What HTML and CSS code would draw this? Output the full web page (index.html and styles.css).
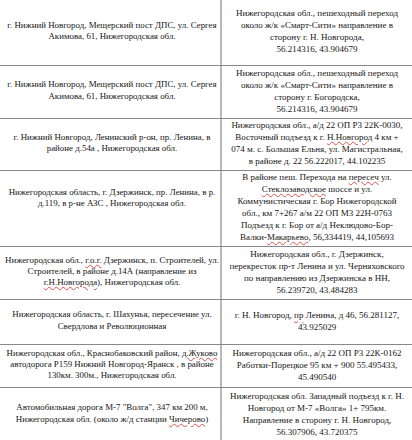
FILE: index.html
```html
<!DOCTYPE html>
<html lang="ru">
<head>
<meta charset="utf-8">
<link rel="stylesheet" href="styles.css">
</head>
<body>
<div class="table">
  <div class="row r1">
    <div class="cell left"><p class="txt">г. Нижний Новгород, Мещерский пост ДПС, ул. Сергея<br>Акимова, 61, Нижегородская обл.</p></div>
    <div class="cell right"><p class="txt">Нижегородская обл., пешеходный переход<br>около ж/к «Смарт-Сити» направление в<br>сторону г. Н. Новгорода,<br>56.214316, 43.904679</p></div>
  </div>
  <div class="row r2">
    <div class="cell left"><p class="txt">г. Нижний Новгород, Мещерский пост ДПС, ул. Сергея<br>Акимова, 61, Нижегородская обл.</p></div>
    <div class="cell right"><p class="txt">Нижегородская обл., пешеходный переход<br>около ж/к «Смарт-Сити» направление в<br>сторону г. Богородска,<br>56.214316, 43.904679</p></div>
  </div>
  <div class="row r3">
    <div class="cell left"><p class="txt">г. Нижний Новгород, Ленинский р-он, пр. Ленина, в<br>районе д.54а , Нижегородская обл.</p></div>
    <div class="cell right"><p class="txt">Нижегородская обл., а/д 22 ОП Р3 22К-0030,<br>Восточный подъезд к г. <span class="sp">Н.Новгород</span> 4 км +<br>074 м. с. Большая Ельня, ул. Магистральная,<br>в районе д. 22 56.222017, 44.102235</p></div>
  </div>
  <div class="row r4">
    <div class="cell left lift"><p class="txt">Нижегородская область, г. Дзержинск, пр. Ленина, в р.<br>д.119, в р-не АЗС , Нижегородская обл.</p></div>
    <div class="cell right"><p class="txt">В районе пеш. Перехода на <span class="sp">пересеч</span> ул.<br><span class="sp">Стеклозаводское</span> шоссе и ул.<br>Коммунистическая г. Бор Нижегородской<br>обл., км 7+267 а/м 22 ОП М3 22Н-0763<br>Подъезд к г. Бор от а/д Неклюдово-Бор-<br>Валки-<span class="sp">Макарьево</span>, 56,334419, 44,105693</p></div>
  </div>
  <div class="row r5">
    <div class="cell left"><p class="txt">Нижегородская обл., <span class="sp">г.о.г.</span> Дзержинск, п. Строителей, ул.<br>Строителей, в районе д.14А (направление из<br><span class="sp">г.Н.Новгорода</span>), Нижегородская обл.</p></div>
    <div class="cell right"><p class="txt">Нижегородская обл., г. Дзержинск,<br>перекресток пр-т Ленина и ул. Черняховского<br>по направлению из Дзержинска в НН,<br>56.239720, 43.484283</p></div>
  </div>
  <div class="row r6">
    <div class="cell left"><p class="txt">Нижегородская область, г. Шахунья, пересечение ул.<br>Свердлова и Революционная</p></div>
    <div class="cell right"><p class="txt">г. Н. Новгород, <span class="sp">пр</span> Ленина, д 46, 56.281127,<br>43.925029</p></div>
  </div>
  <div class="row r7">
    <div class="cell left"><p class="txt">Нижегородская обл., Краснобаковский район, <span class="sp">д.Жуково</span><br>автодорога Р159 Нижний Новгород-Яранск , в районе<br>130км. 300м., Нижегородская обл.</p></div>
    <div class="cell right"><p class="txt">Нижегородская обл., а/д 22 ОП Р3 22К-0162<br>Работки-Порецкое 95 км + 900 55.495433,<br>45.490540</p></div>
  </div>
  <div class="row r8">
    <div class="cell left"><p class="txt">Автомобильная дорога М-7 "Волга", 347 км 200 м,<br>Нижегородская обл. (около ж/д станции <span class="sp">Чичерово</span>)</p></div>
    <div class="cell right"><p class="txt">Нижегородская обл. Западный подъезд к г. Н.<br>Новгород от М-7 «Волга» 1+ 795км.<br>Направление в сторону г. Н. Новгород,<br>56.307906, 43.720375</p></div>
  </div>
</div>
</body>
</html>
```

FILE: styles.css
```css
html, body {
  margin: 0;
  padding: 0;
  background: #ffffff;
}
body {
  font-family: "Liberation Serif", "Times New Roman", serif;
  color: #161616;
  width: 412px;
  overflow: hidden;
}
.table {
  display: flex;
  flex-direction: column;
}
.row {
  display: grid;
  grid-template-columns: 220px 1fr;
  border-bottom: 1px solid #888888;
  box-sizing: border-box;
}
.cell {
  display: flex;
  align-items: center;
  justify-content: center;
  box-sizing: border-box;
  padding-bottom: 3px;
  min-width: 0;
}
.txt {
  margin: 0;
  text-align: center;
  white-space: nowrap;
}
.left {
  font-size: 8.9px;
  line-height: 11.2px;
  padding-left: 6px;
  padding-right: 2px;
}
.right {
  font-size: 9px;
  line-height: 12px;
  border-left: 2px solid #b8b8b8;
  padding-left: 4px;
  padding-right: 4px;
}
.lift {
  padding-bottom: 21px;
}
.sp {
  text-decoration: underline wavy #e05050;
  text-decoration-thickness: 1px;
  text-underline-offset: 1px;
}
.r1 { height: 66px; }
.r2 { height: 53px; }
.r3 { height: 52px; }
.r4 { height: 76px; }
.r5 { height: 53px; }
.r6 { height: 45px; }
.r7 { height: 43px; }
.r8 { height: 54px; border-bottom: none; }
```
